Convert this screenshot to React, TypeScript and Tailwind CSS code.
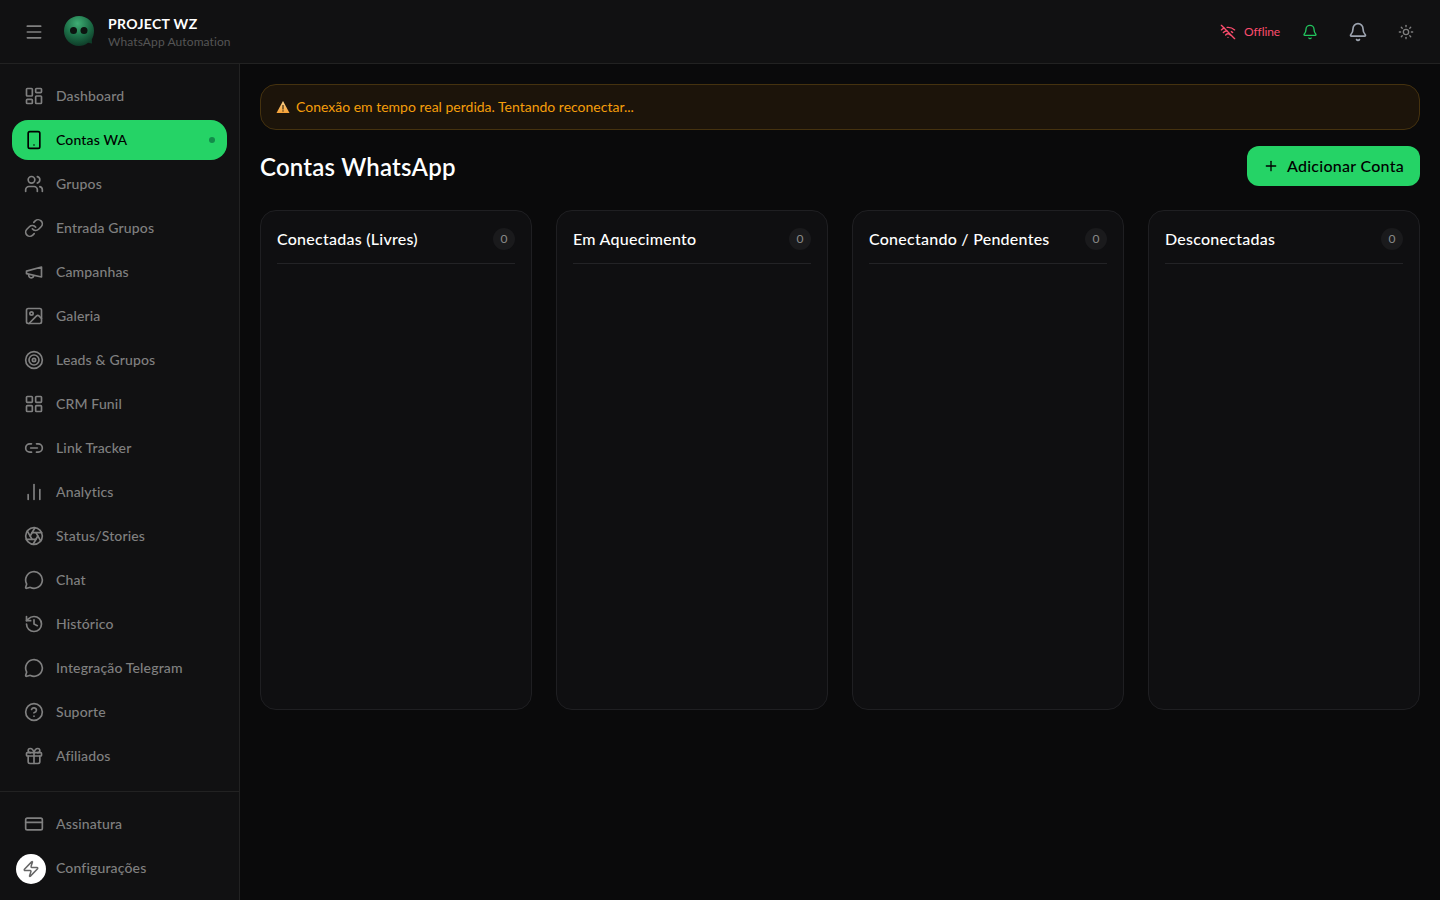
import {
  Aperture,
  Bell,
  ChartNoAxesColumn,
  CircleHelp,
  CreditCard,
  Gift,
  History,
  Image,
  LayoutDashboard,
  LayoutGrid,
  Link,
  Link2,
  Menu,
  MessageCircle,
  Plus,
  Smartphone,
  Sun,
  Target,
  Users,
  WifiOff,
  Zap,
} from "lucide-react";
import type { SVGProps } from "react";

// lucide's current megaphone has another shape, this is the older one from the picture
function Megaphone(props: SVGProps<SVGSVGElement> & { size?: number }) {
  const { size = 20, ...rest } = props;
  return (
    <svg width={size} height={size} viewBox="0 0 24 24" fill="none" stroke="currentColor" strokeLinecap="round" strokeLinejoin="round" {...rest}>
      <path d="m3 11 18-5v12L3 14v-3z" />
      <path d="M11.6 16.8a3 3 0 1 1-5.8-1.6" />
    </svg>
  );
}

const navItems = [
  { label: "Dashboard", icon: LayoutDashboard },
  { label: "Contas WA", icon: Smartphone, active: true },
  { label: "Grupos", icon: Users },
  { label: "Entrada Grupos", icon: Link },
  { label: "Campanhas", icon: Megaphone },
  { label: "Galeria", icon: Image },
  { label: "Leads & Grupos", icon: Target },
  { label: "CRM Funil", icon: LayoutGrid },
  { label: "Link Tracker", icon: Link2 },
  { label: "Analytics", icon: ChartNoAxesColumn },
  { label: "Status/Stories", icon: Aperture },
  { label: "Chat", icon: MessageCircle },
  { label: "Histórico", icon: History },
  { label: "Integração Telegram", icon: MessageCircle },
  { label: "Suporte", icon: CircleHelp },
  { label: "Afiliados", icon: Gift },
];

const columns = [
  "Conectadas (Livres)",
  "Em Aquecimento",
  "Conectando / Pendentes",
  "Desconectadas",
];

function NavItem({ label, icon: Icon, active }: { label: string; icon: React.ElementType; active?: boolean }) {
  return (
    <a
      className={
        active
          ? "flex h-10 items-center gap-3 rounded-2xl bg-[#25d366] px-3 text-sm font-medium tracking-[0.15px] text-black"
          : "flex h-10 items-center gap-3 rounded-2xl px-3 text-sm font-medium tracking-[0.15px] text-[#808080]"
      }
    >
      <Icon size={20} strokeWidth={2} className="shrink-0" />
      <span className="flex-1">{label}</span>
      {active && <span className="h-1.5 w-1.5 rounded-full bg-[#128c4a]" />}
    </a>
  );
}

function Logo() {
  return (
    <svg width="34" height="34" viewBox="0 0 34 34" className="shrink-0">
      <defs>
        <radialGradient id="bubble" cx="45%" cy="25%" r="75%">
          <stop offset="0%" stopColor="#3fae74" />
          <stop offset="55%" stopColor="#1d7048" />
          <stop offset="100%" stopColor="#0f3d29" />
        </radialGradient>
      </defs>
      <path d="M17 1C25.500 1 32 7.500 32 15.500C32 19 31.200 22 29.800 24.500L30 28.500L26 27.800C23.500 30 20 31 17 31C8.500 31 2 24 2 16C2 7.500 8.500 1 17 1Z" fill="url(#bubble)" />
      <circle cx="11.500" cy="15.500" r="3.500" fill="#0c1410" />
      <circle cx="22" cy="15.500" r="3.500" fill="#0c1410" />
    </svg>
  );
}

function WarningIcon() {
  return (
    <svg width="14" height="14" viewBox="0 0 14 14" className="shrink-0">
      <defs>
        <linearGradient id="warn" x1="0" y1="0" x2="0" y2="1">
          <stop offset="0%" stopColor="#fbd38d" />
          <stop offset="100%" stopColor="#f6a035" />
        </linearGradient>
      </defs>
      <path d="M7 1L13.500 13H0.500Z" fill="url(#warn)" />
      <rect x="6.400" y="5" width="1.200" height="4.500" fill="#3a2a10" />
      <rect x="6.400" y="10.300" width="1.200" height="1.300" fill="#3a2a10" />
    </svg>
  );
}

export default function App() {
  return (
    <div className="flex h-[900px] w-full flex-col overflow-hidden bg-[#0a0a0b] font-['Lato','Noto_Sans',sans-serif] text-white [font-variant-ligatures:none]">
      <header className="flex h-16 shrink-0 items-center justify-between border-b border-[#222222] bg-[#111112] pr-[26px] pl-6">
        <div className="flex items-center">
          <Menu size={20} strokeWidth={2} className="text-[#808080]" />
          <div className="ml-[18px]">
            <Logo />
          </div>
          <div className="ml-3">
            <div className="text-sm leading-5 font-bold tracking-wide text-white">PROJECT WZ</div>
            <div className="text-xs leading-4 tracking-[0.1px] text-[#555555]">WhatsApp Automation</div>
          </div>
        </div>
        <div className="flex items-center">
          <div className="flex items-center gap-2 text-xs tracking-[-0.1px] text-[#fb4d6d]">
            <WifiOff size={16} strokeWidth={2} />
            <span>Offline</span>
          </div>
          <Bell size={16} strokeWidth={2} className="ml-[22px] text-[#22c55e]" />
          <Bell size={20} strokeWidth={2} className="ml-[30px] text-[#9ca3af]" />
          <Sun size={16} strokeWidth={2} className="ml-[30px] text-[#808080]" />
        </div>
      </header>

      <div className="flex min-h-0 flex-1">
        <aside className="flex w-60 shrink-0 flex-col border-r border-[#222222] bg-[#111112]">
          <nav className="flex flex-col gap-1 py-3 pr-3 pl-3">
            {navItems.map((item) => (
              <NavItem key={item.label} {...item} />
            ))}
          </nav>
          <div className="mt-auto flex flex-col gap-1 border-t border-[#222222] px-3 pt-3 pb-3">
            <NavItem label="Assinatura" icon={CreditCard} />
            <NavItem label="Configurações" icon={Menu} />
          </div>
        </aside>

        <main className="min-w-0 flex-1 p-5">
          <div className="flex h-[46px] items-center gap-1.5 rounded-2xl border border-[#45320f] bg-[#1c140a] px-[15px] text-sm text-[#f59e0b]">
            <WarningIcon />
            <span>Conexão em tempo real perdida. Tentando reconectar...</span>
          </div>

          <div className="mt-4 flex h-10 items-center justify-between">
            <h1 className="pt-0.5 text-2xl font-semibold tracking-[0.2px] text-white">Contas WhatsApp</h1>
            <button className="flex h-10 items-center gap-2 rounded-xl bg-[#25d366] px-4 text-base font-medium tracking-[0.27px] text-black">
              <Plus size={16} />
              Adicionar Conta
            </button>
          </div>

          <div className="mt-6 grid grid-cols-4 gap-6">
            {columns.map((title) => (
              <section key={title} className="h-[500px] rounded-2xl border border-[#1f1f22] bg-[#0f0f11] px-4 pt-4">
                <div className="flex h-[37px] items-start justify-between border-b border-[#232326]">
                  <h2 className="text-base font-medium tracking-[0.25px] text-white">{title}</h2>
                  <span className="mt-px flex h-[22px] w-[22px] items-center justify-center rounded-full bg-[#1a1a1c] text-xs text-[#8a8a8a]">
                    0
                  </span>
                </div>
              </section>
            ))}
          </div>
        </main>
      </div>

      <div className="fixed bottom-4 left-4 flex h-[30px] w-[30px] items-center justify-center rounded-full bg-white">
        <Zap size={18} strokeWidth={2} className="text-[#666666]" />
      </div>
    </div>
  );
}
